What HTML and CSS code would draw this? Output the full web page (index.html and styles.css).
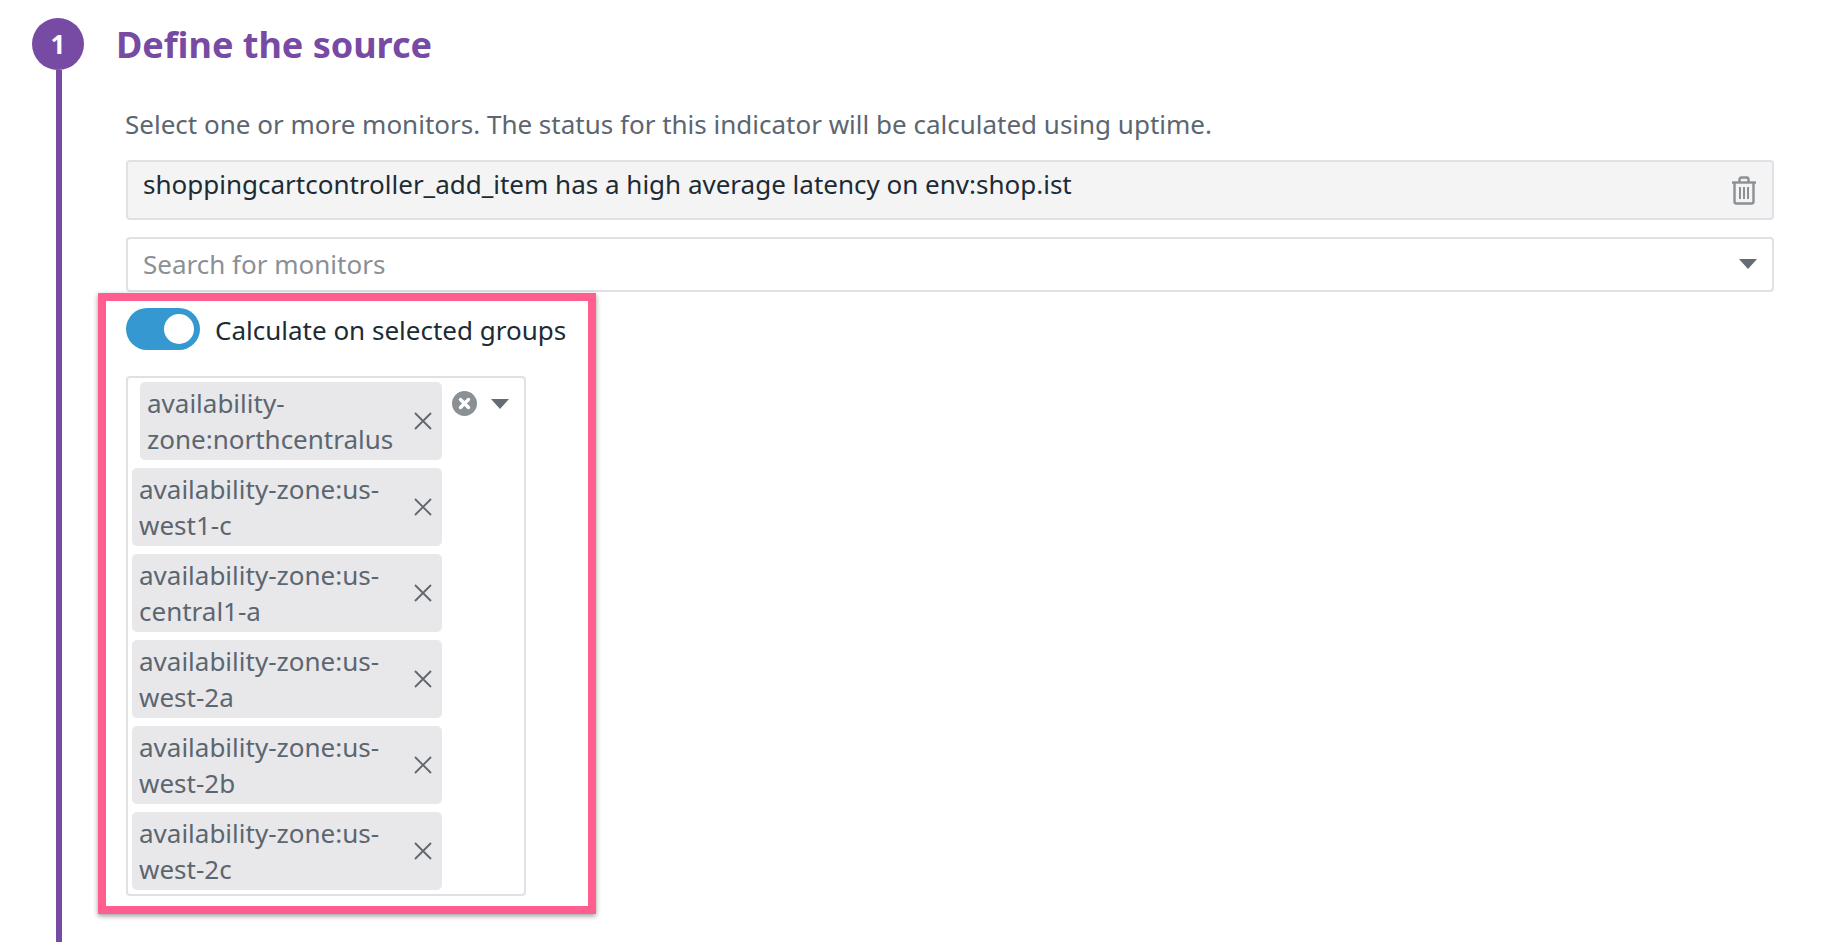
FILE: index.html
```html
<!DOCTYPE html>
<html lang="en">
<head>
    <meta charset="UTF-8">
    <meta name="viewport" content="width=device-width, initial-scale=1.0">
    <title>Define the source</title>
    <link rel="stylesheet" href="styles.css">
</head>
<body>
    <div class="step">
        <div class="rail">
            <div class="step-number">1</div>
            <div class="rail-line"></div>
        </div>
        <div class="step-body">
            <h2 class="step-title">Define the source</h2>
            <p class="hint">Select one or more monitors. The status for this indicator will be calculated using uptime.</p>

            <div class="monitor-row">
                <span>shoppingcartcontroller_add_item has a high average latency on env:shop.ist</span>
                <svg class="trash" width="26" height="29" viewBox="0 0 26 29" fill="none" stroke="#8b9095" stroke-width="2.4">
                    <path d="M1 6.5h24"/>
                    <path d="M8.5 6V3.5Q8.5 1.5 10.5 1.5h5Q17.5 1.5 17.5 3.5V6"/>
                    <path d="M3.5 6.5V25.5Q3.5 27.5 5.5 27.5h15Q22.5 27.5 22.5 25.5V6.5"/>
                    <path d="M9 11v12M13 11v12M17 11v12" stroke-width="2"/>
                </svg>
            </div>

            <div class="search-row">
                <span>Search for monitors</span>
                <span class="caret"></span>
            </div>

            <div class="highlight">
                <div class="toggle-row">
                    <span class="toggle"><span class="knob"></span></span>
                    <span class="toggle-label">Calculate on selected groups</span>
                </div>

                <div class="multi-select">
                    <div class="tags">
                        <div class="tag tag-first">
                            <span class="tag-text">availability-<br>zone:northcentralus</span>
                            <svg class="tag-x" width="20" height="20" viewBox="0 0 20 20" stroke="#5f666d" stroke-width="1.8"><path d="M2 2l16 16M18 2L2 18"/></svg>
                        </div>
                        <div class="tag">
                            <span class="tag-text">availability-zone:us-<br>west1-c</span>
                            <svg class="tag-x" width="20" height="20" viewBox="0 0 20 20" stroke="#5f666d" stroke-width="1.8"><path d="M2 2l16 16M18 2L2 18"/></svg>
                        </div>
                        <div class="tag">
                            <span class="tag-text">availability-zone:us-<br>central1-a</span>
                            <svg class="tag-x" width="20" height="20" viewBox="0 0 20 20" stroke="#5f666d" stroke-width="1.8"><path d="M2 2l16 16M18 2L2 18"/></svg>
                        </div>
                        <div class="tag">
                            <span class="tag-text">availability-zone:us-<br>west-2a</span>
                            <svg class="tag-x" width="20" height="20" viewBox="0 0 20 20" stroke="#5f666d" stroke-width="1.8"><path d="M2 2l16 16M18 2L2 18"/></svg>
                        </div>
                        <div class="tag">
                            <span class="tag-text">availability-zone:us-<br>west-2b</span>
                            <svg class="tag-x" width="20" height="20" viewBox="0 0 20 20" stroke="#5f666d" stroke-width="1.8"><path d="M2 2l16 16M18 2L2 18"/></svg>
                        </div>
                        <div class="tag">
                            <span class="tag-text">availability-zone:us-<br>west-2c</span>
                            <svg class="tag-x" width="20" height="20" viewBox="0 0 20 20" stroke="#5f666d" stroke-width="1.8"><path d="M2 2l16 16M18 2L2 18"/></svg>
                        </div>
                    </div>
                    <div class="controls">
                        <svg width="25" height="25" viewBox="0 0 25 25">
                            <circle cx="12.5" cy="12.5" r="12.5" fill="#8b9095"/>
                            <path d="M8.5 8.5l8 8M16.5 8.5l-8 8" stroke="#fff" stroke-width="3.4" stroke-linecap="round"/>
                        </svg>
                        <span class="caret"></span>
                    </div>
                </div>
            </div>
        </div>
    </div>
</body>
</html>
```

FILE: styles.css
```css
html, body {
    margin: 0;
    height: 100%;
    overflow: hidden;
}
body {
    background: white;
    font-family: "Noto Sans", sans-serif;
    color: #1c2b34;
}
.step {
    display: flex;
    height: 100%;
    padding-top: 18px;
    padding-left: 32px;
    padding-right: 50px;
    box-sizing: border-box;
}
.rail {
    display: flex;
    flex-direction: column;
    align-items: center;
    width: 52px;
    flex: none;
}
.step-number {
    width: 52px;
    height: 52px;
    border-radius: 50%;
    background: #774aa4;
    color: white;
    font-size: 26px;
    font-weight: 700;
    line-height: 52px;
    text-align: center;
    flex: none;
}
.rail-line {
    width: 6px;
    margin-left: 2px;
    flex: 1;
    background: #774aa4;
}
.step-body {
    flex: 1;
    margin-left: 33px;
    min-width: 0;
}
.step-title {
    margin: 0 0 0 -1px;
    padding-top: 1px;
    height: 52px;
    box-sizing: border-box;
    line-height: 52px;
    font-size: 36px;
    font-weight: 700;
    color: #774aa4;
}
.hint {
    margin: 0 0 0 8px;
    padding-top: 36px;
    height: 90px;
    box-sizing: border-box;
    line-height: 36px;
    font-size: 26px;
    color: #5c6670;
}
.monitor-row,
.search-row {
    margin-left: 9px;
    display: flex;
    justify-content: space-between;
    box-sizing: border-box;
    padding: 0 15px;
    border: 2px solid #e0e0e6;
    border-radius: 4px;
    font-size: 26px;
}
.monitor-row {
    height: 60px;
    background: #f4f4f5;
    line-height: 36px;
    padding-top: 4px;
}
.trash {
    margin-top: 10px;
    flex: none;
}
.search-row {
    height: 55px;
    margin-top: 17px;
    padding-bottom: 2px;
    align-items: center;
    color: #8b9095;
}
.caret {
    width: 0;
    height: 0;
    border-left: 9px solid transparent;
    border-right: 9px solid transparent;
    border-top: 10px solid #646b72;
    flex: none;
}
.highlight {
    width: 498px;
    margin-top: 1px;
    margin-left: -19px;
    box-sizing: border-box;
    height: 621px;
    border: 8px solid #ff5e8f;
    padding: 7px 0 0 20px;
    box-shadow: 0 2px 5px rgba(0, 0, 0, 0.4);
}
.toggle-row {
    display: flex;
    align-items: center;
    height: 42px;
}
.toggle {
    display: flex;
    align-items: center;
    justify-content: flex-end;
    width: 74px;
    height: 42px;
    border-radius: 21px;
    background: #3598d0;
    padding-right: 6px;
    box-sizing: border-box;
}
.knob {
    width: 30px;
    height: 30px;
    border-radius: 50%;
    background: white;
}
.toggle-label {
    margin-left: 15px;
    padding-top: 2px;
    font-size: 26px;
}
.multi-select {
    display: flex;
    margin-top: 26px;
    width: 400px;
    height: 520px;
    box-sizing: border-box;
    border: 2px solid #e0e0e6;
    border-radius: 4px;
    padding: 4px 0 0 4px;
}
.tags {
    display: flex;
    flex-direction: column;
    align-items: flex-end;
    gap: 8px;
    width: 310px;
    flex: none;
}
.tag {
    display: flex;
    align-items: center;
    justify-content: space-between;
    width: 310px;
    height: 78px;
    box-sizing: border-box;
    padding: 0 9px 0 7px;
    background: #e8e8ea;
    border-radius: 5px;
    flex: none;
}
.tag-first {
    width: 302px;
}
.tag-text {
    font-size: 26px;
    line-height: 36px;
    color: #5c6670;
}
.tag-x {
    flex: none;
}
.controls {
    display: flex;
    align-items: center;
    height: 25px;
    margin-top: 9px;
    margin-left: 10px;
    gap: 14px;
}
```
